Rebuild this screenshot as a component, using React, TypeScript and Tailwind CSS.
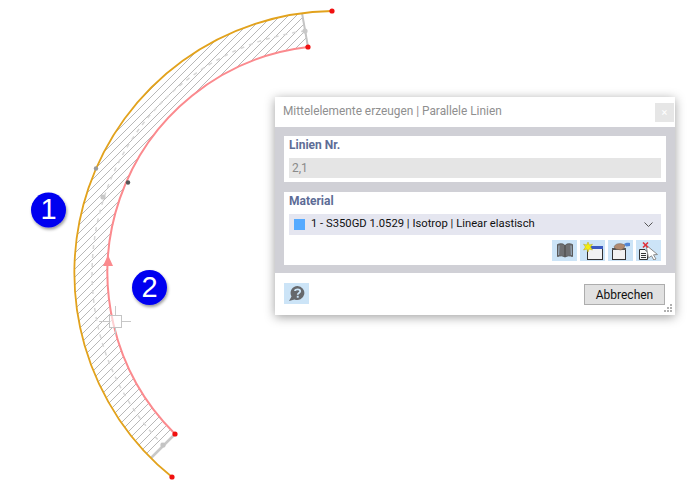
const ff = "font-['Roboto','Noto_Sans',sans-serif]";

function Drawing() {
  const region = "M302 13 A262 262 0 0 0 151 458 L175 434 A227 227 0 0 1 308 47 Z";
  return (
    <svg className="absolute left-0 top-0" width={699} height={497} viewBox="0 0 699 497">
      <defs>
        <pattern id="hatch" x="0" y="0" width="8" height="8" patternUnits="userSpaceOnUse">
          <path d="M-1 1 L1 -1 M0 8 L8 0 M7 9 L9 7" stroke="#b0b0b0" strokeWidth="0.900" fill="none" />
        </pattern>
        <filter id="sh" x="-30%" y="-30%" width="160%" height="160%">
          <feDropShadow dx="1" dy="2" stdDeviation="1.600" floodColor="#000" floodOpacity="0.4" />
        </filter>
      </defs>
      <path d={region} fill="url(#hatch)" />
      <path d="M305 31 A244 244 0 0 0 163 445" fill="none" stroke="#d6d6d6" strokeWidth="1.500" strokeDasharray="4 5" />
      <path d="M302 13 L308 47" stroke="#c4c4c4" strokeWidth="2" />
      <path d="M151 458 L175 434" stroke="#c8c8c8" strokeWidth="2.500" />
      <circle cx="305" cy="31" r="2.600" fill="#c8c8c8" />
      <circle cx="163" cy="445" r="2.600" fill="#c4c4c4" />
      <circle cx="103" cy="197" r="2.600" fill="#c8c8c8" />
      <path d="M332 11 A262 262 0 0 0 172 477" fill="none" stroke="#e2a21c" strokeWidth="1.800" />
      <path d="M308 47 A227 227 0 0 0 175 434" fill="none" stroke="#fb8a8e" strokeWidth="2" />
      <path d="M108 255 L103 266 L113 266 Z" fill="#fb8a8e" />
      <circle cx="332" cy="11" r="2.600" fill="#f01010" />
      <circle cx="308" cy="47" r="2.600" fill="#f01010" />
      <circle cx="175" cy="434" r="2.600" fill="#f01010" />
      <circle cx="172" cy="477" r="2.600" fill="#f01010" />
      <circle cx="96" cy="168.500" r="2.200" fill="#9a9a9a" />
      <circle cx="128" cy="182.500" r="2.200" fill="#555" />
      <path d="M115.500 306 V316 M115.500 327 V335 M99 321.500 H110 M121 321.500 H131" stroke="#c8c8c8" strokeWidth="1" />
      <rect x="109.500" y="315.500" width="12" height="12" fill="#fff" fillOpacity="0.6" stroke="#c4c4c4" />
      <circle cx="48.500" cy="210" r="17.500" fill="#0000f0" filter="url(#sh)" />
      <circle cx="149.500" cy="287.500" r="17.500" fill="#0000f0" filter="url(#sh)" />
    </svg>
  );
}

function Badge({ n, cls }: { n: string; cls: string }) {
  return (
    <div className={`absolute flex h-[35px] w-[35px] items-center justify-center font-['Liberation_Sans',sans-serif] text-[29px] leading-none text-white ${cls}`}>
      {n}
    </div>
  );
}

function IconBtn({ children }: { children: React.ReactNode }) {
  return <button className="flex h-[21px] w-[25px] items-center justify-center bg-[#cce4f7]">{children}</button>;
}

function BookIcon() {
  return (
    <svg width="16" height="15" viewBox="0 0 16 15">
      <path d="M0.500 1.500 C3 0.500 6 0.500 7.500 2 V14 C6 12.500 3 12.500 0.500 13.500 Z" fill="#6f7072" stroke="#5a5a5a" />
      <path d="M15.500 1.500 C13 0.500 10 0.500 8.500 2 V14 C10 12.500 13 12.500 15.500 13.500 Z" fill="#6f7072" stroke="#5a5a5a" />
      <path d="M2 2.500 L1.600 12 M14 2.500 L14.400 12" stroke="#a9c2d8" strokeWidth="0.800" />
    </svg>
  );
}
function NewIcon() {
  return (
    <svg width="20" height="18" viewBox="0 0 20 18">
      <rect x="4.500" y="5.500" width="15" height="12" fill="#f2f2f2" stroke="#333" />
      <rect x="5" y="4" width="15" height="3" fill="#3a5ac0" />
      <path d="M5 0 L6.300 3 L9.500 2.200 L7.500 5 L9.500 8 L6.200 7 L5 10 L3.800 7 L0.500 8 L2.500 5 L0.500 2.200 L3.700 3 Z" fill="#f4ee10" stroke="#b8a820" strokeWidth="0.500" />
    </svg>
  );
}
function HandIcon() {
  return (
    <svg width="20" height="18" viewBox="0 0 20 18">
      <rect x="1.500" y="6.500" width="13" height="11" fill="#f2f2f2" stroke="#333" />
      <rect x="1" y="6" width="14" height="2" fill="#555" />
      <path d="M3 5 C4 2 8 1 11 2 L14 3 L13 6 L10 8 L5 7 Z" fill="#b08a70" stroke="#7c6454" strokeWidth="0.600" />
      <path d="M13 2 C15 0.500 17 0.500 19 1 L19 4 L15 4.500 Z" fill="#4f86d8" />
    </svg>
  );
}
function DeleteCursorIcon() {
  return (
    <svg width="21" height="18" viewBox="0 0 21 18">
      <path d="M1.500 7.500 H7 L9.500 10 V17.500 H1.500 Z" fill="#f6f6f6" stroke="#333" />
      <path d="M3 11.500 H8 M3 13.500 H8 M3 15.500 H8" stroke="#333" />
      <path d="M8 3 L19.500 12.500 L15.500 12.800 L18 17 L15.800 18 L13.500 13.800 L10.500 16 Z" fill="#fff" stroke="#8c8c8c" />
      <path d="M5 0.500 L10 5.500 M10 0.500 L5 5.500" stroke="#e0303a" strokeWidth="1.500" />
    </svg>
  );
}
function HelpIcon() {
  return (
    <svg width="17" height="17" viewBox="0 0 17 17">
      <path d="M9.500 1 A7 7 0 1 1 6.500 14.400 L1 16 L3.500 11.500 A7 7 0 0 1 9.500 1 Z" fill="#66686c" />
      <path d="M7 6 C7 3.800 12.200 3.800 12.200 6.200 C12.200 8 9.700 8 9.700 9.800" fill="none" stroke="#cce4f7" strokeWidth="1.800" />
      <rect x="8.800" y="10.800" width="1.900" height="1.900" fill="#cce4f7" />
    </svg>
  );
}

function Dialog() {
  return (
    <div className={`absolute left-[275px] top-[97px] flex h-[218px] w-[400px] flex-col bg-white shadow-[0_2px_10px_rgba(0,0,0,0.38)] ${ff}`}>
      <div className="flex h-[30px] items-center justify-between pl-2 pr-px">
        <span className="text-[11.85px] text-[#8f8f8f]">Mittelelemente erzeugen | Parallele Linien</span>
        <div className="flex h-[19px] w-[19px] items-center justify-center bg-[#e6e6e6] text-[11px] leading-none text-white">×</div>
      </div>
      <div className="flex h-[146px] flex-col gap-[10px] bg-[#d0d0d6] px-[9px] pt-[9px]">
        <div className="flex h-[46px] flex-col bg-white px-[5px]">
          <div className="h-[22px] pt-[1px] text-[12px] font-bold leading-[16px] text-[#5d6c96]">Linien Nr.</div>
          <div className="flex h-[20px] items-center bg-[#e5e5e5] pl-[3px] text-[12px] text-[#8a8a8a]">2,1</div>
        </div>
        <div className="flex h-[73px] flex-col bg-white px-[5px]">
          <div className="h-[22px] pt-[1px] text-[12px] font-bold leading-[16px] text-[#5d6c96]">Material</div>
          <div className="flex h-[21px] items-center bg-[#e5e6f0] pl-[5px] pr-[8px]">
            <span className="h-[11px] w-[11px] bg-[#55aaff]" />
            <span className="ml-[6px] flex-1 text-[11.25px] text-[#111]">1 - S350GD 1.0529 | Isotrop | Linear elastisch</span>
            <svg width="9" height="6" viewBox="0 0 9 6"><path d="M0.500 0.500 L4.500 4.500 L8.500 0.500" fill="none" stroke="#555" /></svg>
          </div>
          <div className="mt-[5px] flex justify-end gap-[3px]">
            <IconBtn><BookIcon /></IconBtn>
            <IconBtn><NewIcon /></IconBtn>
            <IconBtn><HandIcon /></IconBtn>
            <IconBtn><DeleteCursorIcon /></IconBtn>
          </div>
        </div>
      </div>
      <div className="relative flex flex-1 items-start justify-between pl-[9px] pr-[10px] pt-[10px]">
        <button className="flex h-[21px] w-[25px] items-center justify-center bg-[#cce4f7]"><HelpIcon /></button>
        <button className="mt-[1px] h-[21px] w-[81px] border border-[#adadad] bg-[#e1e1e1] text-[12px] leading-none text-[#111]">Abbrechen</button>
        <svg className="absolute bottom-[3px] right-[3px]" width="8" height="8" viewBox="0 0 8 8">
          <path d="M6 0h2v2H6zM3 3h2v2H3zM6 3h2v2H6zM0 6h2v2H0zM3 6h2v2H3zM6 6h2v2H6z" fill="#b0b0b0" />
        </svg>
      </div>
    </div>
  );
}

export default function App() {
  return (
    <div className="relative h-[497px] w-[699px] overflow-hidden bg-white">
      <Drawing />
      <Badge n="1" cls="left-[31px] top-[192px]" />
      <Badge n="2" cls="left-[132px] top-[270px]" />
      <Dialog />
    </div>
  );
}
